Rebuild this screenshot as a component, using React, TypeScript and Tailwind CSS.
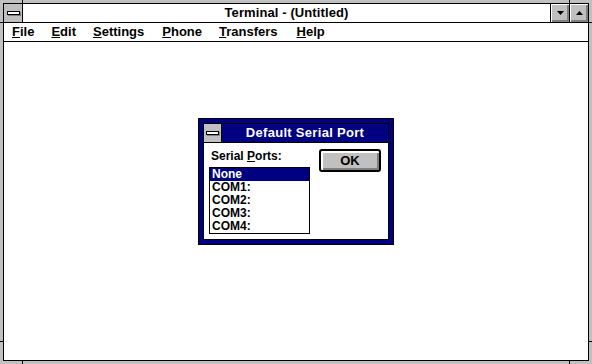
import React from "react";

const bevel =
  "shadow-[inset_1px_1px_0_#ffffff,inset_-1px_-1px_0_#808080,inset_-2px_-2px_0_#808080]";

function Arrow({ up }: { up?: boolean }) {
  return (
    <svg width="7" height="4" viewBox="0 0 7 4" className="block">
      {up ? <path d="M3.5 0 L7 4 L0 4 Z" fill="#000" /> : <path d="M0 0 L7 0 L3.5 4 Z" fill="#000" />}
    </svg>
  );
}

function SysBox({ width }: { width: string }) {
  return (
    <div className={`${width} h-full bg-[#c0c0c0] border-r border-black flex items-center justify-center`}>
      <div className="w-[13px] h-[4px] bg-white border border-black shadow-[1px_1px_0_#808080]" />
    </div>
  );
}

function MenuItem({ first, rest, className = "" }: { first: string; rest: string; className?: string }) {
  return (
    <span className={className}>
      <span className="underline decoration-1 underline-offset-[1px]">{first}</span>
      {rest}
    </span>
  );
}

export default function App() {
  const ports = ["None", "COM1:", "COM2:", "COM3:", "COM4:"];

  return (
    <div className="relative w-[592px] h-[364px] overflow-hidden bg-[#c0c0c0] p-[3px] font-['Liberation_Sans',Arial,sans-serif] font-bold text-black">
      {/* Main window */}
      <div className="h-full border border-black bg-white flex flex-col">
        {/* Title bar (inactive) */}
        <div className="h-[19px] shrink-0 border-b border-black flex bg-white">
          <SysBox width="w-[19px]" />
          <div className="flex-1 text-center text-[13px] leading-[18px] tracking-[0.1px]">Terminal - (Untitled)</div>
          <div className={`w-[19px] h-full border-l border-black bg-[#c0c0c0] flex items-center justify-center ${bevel}`}>
            <Arrow />
          </div>
          <div className={`w-[19px] h-full border-l border-black bg-[#c0c0c0] flex items-center justify-center ${bevel}`}>
            <Arrow up />
          </div>
        </div>

        {/* Menu bar */}
        <div className="h-[19px] shrink-0 border-b border-black flex items-center gap-[17px] pl-[8px] text-[13px] leading-[18px]">
          <MenuItem first="F" rest="ile" />
          <MenuItem first="E" rest="dit" />
          <MenuItem first="S" rest="ettings" />
          <MenuItem first="P" rest="hone" className="ml-[1px]" />
          <MenuItem first="T" rest="ransfers" />
          <MenuItem first="H" rest="elp" className="ml-[2px]" />
        </div>

        {/* Client area */}
        <div className="flex-1 bg-white" />
      </div>

      {/* Sizing frame marks */}
      <div className="absolute left-[22px] top-0 w-px h-[3px] bg-black" />
      <div className="absolute left-[569px] top-0 w-px h-[3px] bg-black" />
      <div className="absolute left-[22px] bottom-0 w-px h-[3px] bg-black" />
      <div className="absolute left-[569px] bottom-0 w-px h-[3px] bg-black" />
      <div className="absolute left-0 top-[22px] w-[3px] h-px bg-black" />
      <div className="absolute right-0 top-[22px] w-[3px] h-px bg-black" />
      <div className="absolute left-0 top-[341px] w-[3px] h-px bg-black" />
      <div className="absolute right-0 top-[341px] w-[3px] h-px bg-black" />

      {/* Default Serial Port dialog */}
      <div className="absolute left-[198px] top-[118px] w-[196px] h-[127px] border border-black bg-[#000080] p-[4px]">
        <div className="h-full border border-black bg-white flex flex-col">
          <div className="h-[19px] shrink-0 border-b border-black bg-[#000080] flex">
            <SysBox width="w-[18px]" />
            <div className="flex-1 text-center text-white text-[13px] leading-[18px] tracking-[0.3px]">Default Serial Port</div>
          </div>
          <div className="flex pt-[6px] pl-[5px]">
            <div className="flex flex-col">
              <div className="pl-[2px] h-[14px] text-[12px] leading-[14px]">
                Serial <span className="underline decoration-1 underline-offset-[1px]">P</span>orts:
              </div>
              <div className="mt-[4px] w-[101px] h-[67px] border border-black bg-white flex flex-col">
                {ports.map((p, i) => (
                  <div
                    key={p}
                    className={`h-[13px] pl-[2px] text-[12px] leading-[13px] ${i === 0 ? "bg-[#000080] text-white" : ""}`}
                  >
                    {p}
                  </div>
                ))}
              </div>
            </div>
            <div className="ml-[9px]">
              <div className="w-[62px] h-[23px] border-2 border-black rounded-[3px] bg-[#c0c0c0] shadow-[inset_1px_1px_0_#ffffff,inset_2px_2px_0_#ffffff,inset_-1px_-1px_0_#808080,inset_-2px_-2px_0_#808080] flex items-center justify-center text-[13px]">
                OK
              </div>
            </div>
          </div>
        </div>
      </div>
    </div>
  );
}
